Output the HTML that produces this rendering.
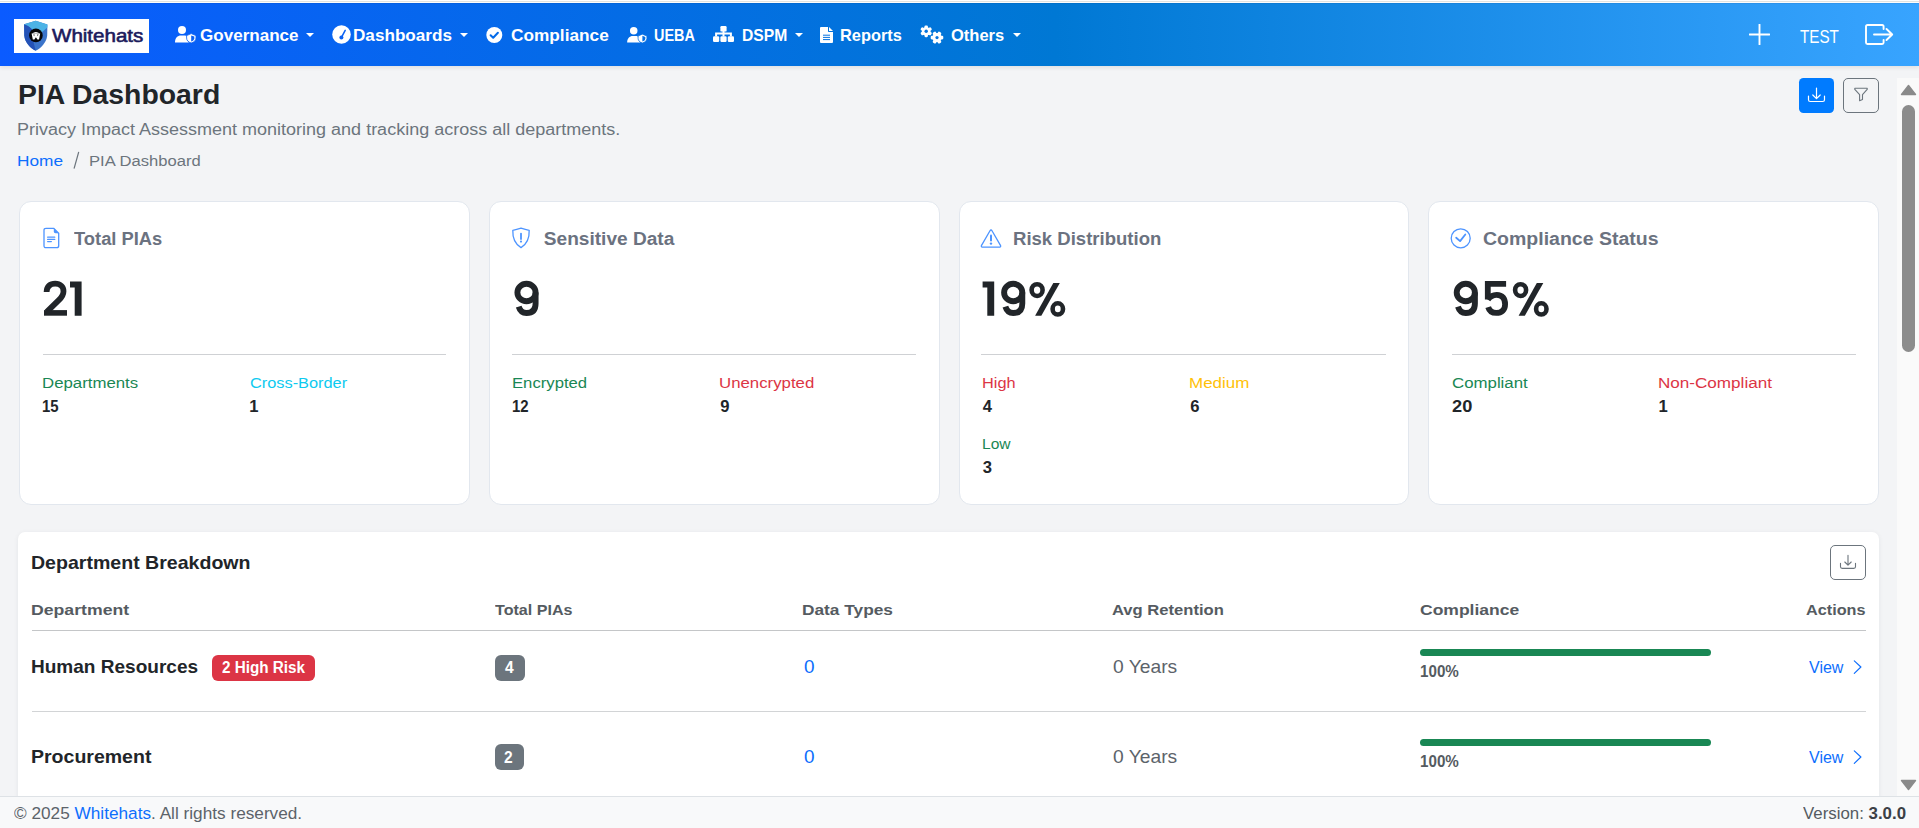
<!DOCTYPE html>
<html><head><meta charset="utf-8"><title>PIA Dashboard</title>
<style>
html,body{margin:0;padding:0;}
body{width:1919px;height:828px;overflow:hidden;position:relative;background:#f3f4f6;font-family:"Liberation Sans",sans-serif;}
.t{position:absolute;white-space:nowrap;line-height:1;transform-origin:0 0;}
.abs{position:absolute;}
#topline{left:0;top:0;width:1919px;height:3px;background:#fefefe;}
#topline2{left:0;top:1px;width:1919px;height:1px;background:#e2e3e0;}
#nav{left:0;top:3px;width:1919px;height:63px;background:linear-gradient(90deg,#0a5bff 0%,#0078d4 55%,#38a4ff 100%);box-shadow:0 2px 4px rgba(0,0,0,.08);}
#nav:before{content:"";position:absolute;left:0;top:0;right:0;height:1px;background:rgba(0,0,40,.06);}
#logo{left:14px;top:19px;width:135px;height:34px;background:#fff;}
.card{position:absolute;background:#fff;border:1px solid #e2e7ee;border-radius:12px;box-sizing:border-box;}
.divider{position:absolute;height:1px;background:#cfd1d4;}
.badge{position:absolute;border-radius:6px;}
.prog{position:absolute;height:7px;border-radius:4px;background:#198754;}
.hr{position:absolute;height:1px;}

</style></head><body>
<div class="abs" id="topline"></div><div class="abs" id="topline2"></div>
<div class="abs" id="nav"></div>
<div class="abs" id="logo"></div>
<!-- logo shield -->
<svg class="abs" style="left:20px;top:18px" width="32" height="36" viewBox="0 0 32 36">
  <path d="M4.1 6.3 L15.7 2.8 L27.4 6.5 L27.2 17.5 C26.5 24 22 29.5 15.7 32.8 C9.4 29.5 4.9 24 4.3 17.5 Z" fill="#3b74ca"/>
  <path d="M4.1 6.3 C9 7.8 13 10.5 15.9 17.4 L13.2 23 L15.7 32.8 C9.4 29.5 4.9 24 4.3 17.5 Z" fill="#2452b6"/>
  <path d="M4.1 6.3 L15.7 2.8 L27.4 6.5 L27.3 9.5 L21.5 14.5 L15.9 17.4 C13.5 11.5 9.5 8 4.1 6.3 Z" fill="#4cb3e6"/>
  <circle cx="15.9" cy="17.4" r="6.8" fill="#050508"/>
  <path d="M12 15.6 Q15.9 12.2 19.8 15.6 Z" fill="#fff"/>
  <path d="M11.6 15.4 H20.2 L19 21.6 H17.4 L15.9 19.3 L14.4 21.6 H12.8 Z" fill="#fff"/>
  <path d="M13.3 16.6 L14.6 16.6 L14.1 18.2 Z M17.2 16.6 L18.5 16.6 L17.7 18.2 Z" fill="#050508"/>
</svg>
<!-- nav icons (white) -->
<!-- user-shield governance -->
<svg class="abs" style="left:175px;top:26.3px" width="22" height="17.5" viewBox="0 0 22 17.5">
  <circle cx="7" cy="4" r="4" fill="#fff"/>
  <path d="M0 16.5 C0 12 2.5 9.5 6 9.5 H9 C10.5 9.5 11.5 10 12.2 10.6 V12 C12.2 14 13 15.5 14 16.5 Z" fill="#fff"/>
  <path d="M16.2 7.6 L21 9.6 V12 C21 14.5 19 16.2 16.2 17 C13.4 16.2 11.6 14.5 11.6 12 V9.6 Z" fill="#fff" stroke="#0a60f2" stroke-width="0.8"/>
  <path d="M16.2 9.4 L19.3 10.6 V12.2 C19.3 13.8 18 14.9 16.2 15.4 Z" fill="#0a60f2"/>
</svg>
<svg class="abs" style="left:306px;top:33px" width="8" height="4" viewBox="0 0 8 4"><path d="M0 0 H8 L4 4 Z" fill="#fff"/></svg>
<!-- tachometer dashboards -->
<svg class="abs" style="left:331.5px;top:25px" width="19" height="19" viewBox="0 0 19 19">
  <circle cx="9.5" cy="9.5" r="9.3" fill="#fff"/>
  <path d="M13.2 5.3 L9.6 12.2" stroke="#0a60f2" stroke-width="1.5" stroke-linecap="round"/>
  <circle cx="9.4" cy="12.6" r="2" fill="#0a60f2"/>
</svg>
<svg class="abs" style="left:460px;top:33px" width="8" height="4" viewBox="0 0 8 4"><path d="M0 0 H8 L4 4 Z" fill="#fff"/></svg>
<!-- check-circle compliance -->
<svg class="abs" style="left:485.5px;top:27px" width="17" height="16" viewBox="0 0 17 16">
  <circle cx="8.3" cy="8" r="8" fill="#fff"/>
  <path d="M4.6 8.3 L7.2 10.8 L11.9 5.8" stroke="#046be9" stroke-width="2" fill="none" stroke-linecap="round" stroke-linejoin="round"/>
</svg>
<!-- user-shield UEBA -->
<svg class="abs" style="left:626.5px;top:27px" width="21" height="16" viewBox="0 0 22 17">
  <circle cx="7" cy="4" r="4" fill="#fff"/>
  <path d="M0 16.5 C0 12 2.5 9.5 6 9.5 H9 C10.5 9.5 11.5 10 12.2 10.6 V12 C12.2 14 13 15.5 14 16.5 Z" fill="#fff"/>
  <path d="M16.2 7.6 L21 9.6 V12 C21 14.5 19 16.2 16.2 17 C13.4 16.2 11.6 14.5 11.6 12 V9.6 Z" fill="#fff" stroke="#0470e4" stroke-width="0.8"/>
  <path d="M16.2 9.4 L19.3 10.6 V12.2 C19.3 13.8 18 14.9 16.2 15.4 Z" fill="#0470e4"/>
</svg>
<!-- sitemap DSPM -->
<svg class="abs" style="left:713px;top:26px" width="21" height="16" viewBox="0 0 21 16">
  <rect x="7.4" y="0" width="6.2" height="5.6" rx="1.2" fill="#fff"/>
  <rect x="0" y="10.2" width="6.2" height="5.8" rx="1.2" fill="#fff"/>
  <rect x="7.4" y="10.2" width="6.2" height="5.8" rx="1.2" fill="#fff"/>
  <rect x="14.8" y="10.2" width="6.2" height="5.8" rx="1.2" fill="#fff"/>
  <path d="M10.5 5 V10.5 M3.1 10.5 V7.6 H17.9 V10.5" stroke="#fff" stroke-width="2" fill="none"/>
</svg>
<svg class="abs" style="left:795px;top:33px" width="8" height="4" viewBox="0 0 8 4"><path d="M0 0 H8 L4 4 Z" fill="#fff"/></svg>
<!-- file-alt reports -->
<svg class="abs" style="left:820px;top:27px" width="13" height="16" viewBox="0 0 13 16">
  <path d="M0 1 Q0 0 1 0 H8 V4.2 Q8 5 8.8 5 H13 V15 Q13 16 12 16 H1 Q0 16 0 15 Z" fill="#fff"/>
  <path d="M9 0 L13 4 H9 Z" fill="#fff"/>
  <path d="M3 8.2 H10 M3 10.4 H10 M3 12.6 H10" stroke="#0672e0" stroke-width="1"/>
</svg>
<!-- cogs others -->
<svg class="abs" style="left:919.5px;top:25px" width="24" height="20" viewBox="0 0 24 20">
  <g transform="translate(6.2,6.3)" fill="#fff">
    <circle r="4.3"/>
    <rect x="-1.7" y="-5.9" width="3.4" height="11.8" rx="1.1"/><rect x="-1.7" y="-5.9" width="3.4" height="11.8" rx="1.1" transform="rotate(60)"/><rect x="-1.7" y="-5.9" width="3.4" height="11.8" rx="1.1" transform="rotate(120)"/>
    <circle r="1.7" fill="#0675df"/>
  </g>
  <g transform="translate(17,12.6)" fill="#fff">
    <circle r="4.6"/>
    <rect x="-1.8" y="-6.3" width="3.6" height="12.6" rx="1.1" transform="rotate(90)"/><rect x="-1.8" y="-6.3" width="3.6" height="12.6" rx="1.1" transform="rotate(30)"/><rect x="-1.8" y="-6.3" width="3.6" height="12.6" rx="1.1" transform="rotate(150)"/>
    <circle r="1.6" fill="#0675df"/>
  </g>
</svg>
<svg class="abs" style="left:1013px;top:33px" width="8" height="4" viewBox="0 0 8 4"><path d="M0 0 H8 L4 4 Z" fill="#fff"/></svg>
<!-- plus -->
<svg class="abs" style="left:1749px;top:24px" width="21" height="21" viewBox="0 0 21 21">
  <path d="M10.5 0.5 V20.5 M0.5 10.5 H20.5" stroke="#fff" stroke-width="1.9" stroke-linecap="round"/>
</svg>
<!-- logout -->
<svg class="abs" style="left:1865px;top:24px" width="29" height="21" viewBox="0 0 29 21">
  <path d="M18.6 5 V2.5 Q18.6 1 17.1 1 H2.5 Q1 1 1 2.5 V18.5 Q1 20 2.5 20 H17.1 Q18.6 20 18.6 18.5 V16" stroke="#fff" stroke-width="1.9" fill="none" stroke-linecap="round"/>
  <path d="M9 10.5 H27 M21.5 5 L27.2 10.5 L21.5 16" stroke="#fff" stroke-width="1.9" fill="none" stroke-linecap="round" stroke-linejoin="round"/>
</svg>

<!-- top right buttons -->
<div class="abs" style="left:1799px;top:78px;width:35px;height:35px;border-radius:4.5px;background:#007bff"></div>
<svg class="abs" style="left:1807px;top:87px" width="19" height="16" viewBox="0 0 19 16">
  <path d="M9.5 1 V11.5 M5.8 8 L9.5 11.7 L13.2 8" stroke="#fff" stroke-width="1.2" fill="none" stroke-linecap="round" stroke-linejoin="round"/>
  <path d="M1.5 9 V12.7 Q1.5 14.5 3.3 14.5 H15.7 Q17.5 14.5 17.5 12.7 V9" stroke="#fff" stroke-width="1.2" fill="none" stroke-linecap="round"/>
</svg>
<div class="abs" style="left:1843px;top:78px;width:36px;height:35px;border-radius:5px;border:1px solid #6c757d;box-sizing:border-box"></div>
<svg class="abs" style="left:1853px;top:87px" width="16" height="16" viewBox="0 0 16 16">
  <path d="M1.8 1.2 H14.2 V2.4 L9.5 7.6 V12.6 L6.6 13.8 V7.6 L1.8 2.4 Z" stroke="#6c757d" stroke-width="1.1" fill="none" stroke-linejoin="round"/>
</svg>

<!-- cards -->
<div class="card" style="left:18.5px;top:200.5px;width:451px;height:304px"></div>
<div class="card" style="left:488.5px;top:200.5px;width:451px;height:304px"></div>
<div class="card" style="left:958.5px;top:200.5px;width:450px;height:304px"></div>
<div class="card" style="left:1428px;top:200.5px;width:451px;height:304px"></div>
<div class="divider" style="left:42.5px;top:354px;width:403px"></div>
<div class="divider" style="left:511.5px;top:354px;width:404.5px"></div>
<div class="divider" style="left:981px;top:354px;width:405px"></div>
<div class="divider" style="left:1451.5px;top:354px;width:404px"></div>
<!-- card icons (blue outline) -->
<svg class="abs" style="left:43px;top:227px" width="17" height="22" viewBox="0 0 17 22">
  <path d="M3 1.3 H10.8 L15.7 6.2 V18.7 Q15.7 20.7 13.7 20.7 H3 Q1 20.7 1 18.7 V3.3 Q1 1.3 3 1.3 Z" stroke="#4d94ff" stroke-width="1.3" fill="none"/>
  <path d="M10.8 1.3 V4.5 Q10.8 6.2 12.5 6.2 H15.7 Z" fill="#4d94ff"/>
  <path d="M4.6 10.2 H11.8 M4.6 12.4 H11.8 M4.6 14.6 H8.4" stroke="#4d94ff" stroke-width="1.2" stroke-linecap="round"/>
</svg>
<svg class="abs" style="left:511px;top:227px" width="20" height="22" viewBox="0 0 20 22">
  <path d="M10 1.2 C7 2.2 4.3 2.9 1.8 3.3 C1.5 11 3.8 17 10 20.6 C16.2 17 18.5 11 18.2 3.3 C15.7 2.9 13 2.2 10 1.2 Z" stroke="#4d94ff" stroke-width="1.3" fill="none" stroke-linejoin="round"/>
  <path d="M10 6.6 V12" stroke="#4d94ff" stroke-width="1.8" stroke-linecap="round"/>
  <circle cx="10" cy="14.6" r="1.05" fill="#4d94ff"/>
</svg>
<svg class="abs" style="left:980px;top:227.8px" width="22" height="21" viewBox="0 0 22 21">
  <path d="M11 2 Q11.6 2 12 2.7 L20.6 17.6 Q21 18.9 19.6 19.2 H2.4 Q1 18.9 1.4 17.6 L10 2.7 Q10.4 2 11 2 Z" stroke="#4d94ff" stroke-width="1.3" fill="none" stroke-linejoin="round"/>
  <path d="M11 7.6 L11 12.6" stroke="#4d94ff" stroke-width="2" stroke-linecap="round"/>
  <circle cx="11" cy="15.6" r="1.2" fill="#4d94ff"/>
</svg>
<svg class="abs" style="left:1450px;top:228px" width="22" height="21" viewBox="0 0 22 21">
  <circle cx="10.7" cy="10.3" r="9.5" stroke="#4d94ff" stroke-width="1.3" fill="none"/>
  <path d="M6.2 9.7 L10.1 13.1 L15.3 6.5" stroke="#4d94ff" stroke-width="1.8" fill="none" stroke-linecap="round" stroke-linejoin="round"/>
</svg>

<!-- table card -->
<div class="abs" style="left:18px;top:531.5px;width:1861px;height:330px;background:#fff;border-radius:7px;box-shadow:0 1px 5px rgba(30,40,60,.07)"></div>
<div class="abs" style="left:1830px;top:545px;width:36px;height:35px;border-radius:5px;border:1px solid #6c757d;box-sizing:border-box"></div>
<svg class="abs" style="left:1839px;top:554px" width="18" height="16" viewBox="0 0 18 16">
  <path d="M9 1.2 V11 M5.8 8 L9 11.2 L12.2 8" stroke="#6c757d" stroke-width="1.1" fill="none" stroke-linecap="round" stroke-linejoin="round"/>
  <path d="M1.5 9.2 V12.8 Q1.5 14.4 3.1 14.4 H14.9 Q16.5 14.4 16.5 12.8 V9.2" stroke="#6c757d" stroke-width="1.1" fill="none" stroke-linecap="round"/>
</svg>
<div class="hr" style="left:31.5px;top:629.5px;width:1834px;background:#c4c6c8"></div>
<div class="hr" style="left:31.5px;top:711px;width:1834px;background:#d2d4d6"></div>
<div class="badge" style="left:212px;top:655px;width:103px;height:26px;background:#dc3545"></div>
<div class="badge" style="left:495px;top:655px;width:30px;height:26px;background:#6c757d"></div>
<div class="badge" style="left:495px;top:744px;width:28.5px;height:26px;background:#6c757d"></div>
<div class="prog" style="left:1420px;top:649px;width:291px"></div>
<div class="prog" style="left:1420px;top:739px;width:291px"></div>
<svg class="abs" style="left:1852px;top:660px" width="11" height="15" viewBox="0 0 11 15"><path d="M2.3 0.8 L8.9 7 L2.3 13.3" stroke="#0d6efd" stroke-width="1.15" fill="none" stroke-linecap="round" stroke-linejoin="round"/></svg>
<svg class="abs" style="left:1852px;top:750px" width="11" height="15" viewBox="0 0 11 15"><path d="M2.3 0.8 L8.9 7 L2.3 13.3" stroke="#0d6efd" stroke-width="1.15" fill="none" stroke-linecap="round" stroke-linejoin="round"/></svg>

<!-- scrollbar -->
<div class="abs" style="left:1897px;top:78px;width:22px;height:718px;background:#fafafa"></div>
<svg class="abs" style="left:1900px;top:84px" width="17" height="12" viewBox="0 0 17 12"><path d="M8.5 1.5 L15.5 10.5 H1.5 Z" fill="#8a8a8a" stroke="#8a8a8a" stroke-width="1.4" stroke-linejoin="round"/></svg>
<div class="abs" style="left:1902px;top:105px;width:13px;height:247px;border-radius:6.5px;background:#8c8c8c"></div>
<svg class="abs" style="left:1900px;top:779px" width="17" height="12" viewBox="0 0 17 12"><path d="M8.5 10.5 L15.5 1.5 H1.5 Z" fill="#8a8a8a" stroke="#8a8a8a" stroke-width="1.4" stroke-linejoin="round"/></svg>

<!-- footer -->
<div class="abs" style="left:0;top:796px;width:1919px;height:32px;background:#f8f9fa;border-top:1px solid #dee2e6;box-sizing:border-box"></div>
<svg class="abs" style="left:72px;top:151px" width="9" height="19" viewBox="0 0 9 19"><path d="M6.6 1.3 L2.2 17.2" stroke="#6c757d" stroke-width="1.25" stroke-linecap="round"/></svg>
<svg class="abs" style="left:0;top:0" width="1919" height="400" fill="#212529" stroke="#212529"><g transform="translate(43.6,280.9)"><path d="M3.0 11.2 C3.0 5.5 6.6 2.8 11.6 2.8 C16.8 2.8 19.9 6 19.9 10.3 C19.9 13.8 18.2 16.4 15.2 19.3 L3.2 31.0" fill="none" stroke-width="5.8"/><rect x="0.4" y="29.2" width="23" height="5.6" stroke="none"/></g><g transform="translate(70,280.9)"><path d="M0 0.7 H11.6 V34.8 H4.7 V6.5 H0 Z" stroke="none"/></g><g transform="translate(514.4,280.9)"><ellipse cx="12.1" cy="11.6" rx="9.1" ry="8.7" fill="none" stroke-width="5.9"/><path d="M21.2 11.6 V22.5 C21.2 29.5 17.8 32.1 12.1 32.1 C8.2 32.1 5.6 30.2 4.3 25.8" fill="none" stroke-width="5.9"/></g><g transform="translate(982.6,280.9)"><path d="M0 0.7 H11.6 V34.8 H4.7 V6.5 H0 Z" stroke="none"/></g><g transform="translate(1001.1,280.9)"><ellipse cx="12.1" cy="11.6" rx="9.1" ry="8.7" fill="none" stroke-width="5.9"/><path d="M21.2 11.6 V22.5 C21.2 29.5 17.8 32.1 12.1 32.1 C8.2 32.1 5.6 30.2 4.3 25.8" fill="none" stroke-width="5.9"/></g><g transform="translate(1029.3,280.9)"><ellipse cx="7.8" cy="9.2" rx="5.5" ry="5.9" stroke-width="4.6" fill="none"/><ellipse cx="28.5" cy="28" rx="5.2" ry="5.6" stroke-width="4.6" fill="none"/><path d="M24 2.1 H30.5 L12 34.8 H5.8 Z" stroke="none"/></g><g transform="translate(1453.7,280.9)"><ellipse cx="12.1" cy="11.6" rx="9.1" ry="8.7" fill="none" stroke-width="5.9"/><path d="M21.2 11.6 V22.5 C21.2 29.5 17.8 32.1 12.1 32.1 C8.2 32.1 5.6 30.2 4.3 25.8" fill="none" stroke-width="5.9"/></g><g transform="translate(1484.1,280.9)"><path d="M22 2.9 H3.7 V18.5" fill="none" stroke-width="5.8"/><path d="M3.7 18.8 C5.8 15.6 8.8 13.9 12.6 13.9 C18.3 13.9 21.0 17.8 21.0 23.3 C21.0 29.2 17.4 32 12.2 32 C8 32 5.1 29.8 4.1 26.2" fill="none" stroke-width="5.8"/></g><g transform="translate(1512.8,280.9)"><ellipse cx="7.8" cy="9.2" rx="5.5" ry="5.9" stroke-width="4.6" fill="none"/><ellipse cx="28.5" cy="28" rx="5.2" ry="5.6" stroke-width="4.6" fill="none"/><path d="M24 2.1 H30.5 L12 34.8 H5.8 Z" stroke="none"/></g></svg>
<div class="t" id="logotxt" style="left:52.00px;top:26.79px;font-size:18.6px;color:#1b1a5c;font-weight:400;transform:scaleX(1.1047);-webkit-text-stroke:0.6px #1b1a5c;">Whitehats</div>
<div class="t" id="nav0" style="left:199.70px;top:27.69px;font-size:16.6px;color:#ffffff;font-weight:700;transform:scaleX(1.0273);">Governance</div>
<div class="t" id="nav1" style="left:352.97px;top:27.69px;font-size:16.6px;color:#ffffff;font-weight:700;transform:scaleX(1.0320);">Dashboards</div>
<div class="t" id="nav2" style="left:510.80px;top:27.69px;font-size:16.6px;color:#ffffff;font-weight:700;transform:scaleX(1.0392);">Compliance</div>
<div class="t" id="nav3" style="left:654.13px;top:27.69px;font-size:16.6px;color:#ffffff;font-weight:700;transform:scaleX(0.8689);">UEBA</div>
<div class="t" id="nav4" style="left:741.56px;top:27.69px;font-size:16.6px;color:#ffffff;font-weight:700;transform:scaleX(0.9432);">DSPM</div>
<div class="t" id="nav5" style="left:840.31px;top:27.69px;font-size:16.6px;color:#ffffff;font-weight:700;transform:scaleX(0.9875);">Reports</div>
<div class="t" id="nav6" style="left:951.00px;top:27.69px;font-size:16.6px;color:#ffffff;font-weight:700;transform:scaleX(0.9952);">Others</div>
<div class="t" id="test" style="left:1800.40px;top:27.79px;font-size:18.6px;color:#ffffff;font-weight:400;transform:scaleX(0.8185);">TEST</div>
<div class="t" id="h1" style="left:18.46px;top:80.59px;font-size:27.3px;color:#212529;font-weight:700;transform:scaleX(1.0389);">PIA Dashboard</div>
<div class="t" id="sub" style="left:17.36px;top:122.07px;font-size:15.8px;color:#6c757d;font-weight:400;transform:scaleX(1.1394);">Privacy Impact Assessment monitoring and tracking across all departments.</div>
<div class="t" id="home" style="left:17.46px;top:152.78px;font-size:15.2px;color:#0d6efd;font-weight:400;transform:scaleX(1.1365);">Home</div>
<div class="t" id="crumb" style="left:88.51px;top:152.78px;font-size:15.2px;color:#6c757d;font-weight:400;transform:scaleX(1.0930);">PIA Dashboard</div>
<div class="t" id="ct0" style="left:73.70px;top:228.76px;font-size:19.1px;color:#6b7280;font-weight:700;transform:scaleX(0.9603);">Total PIAs</div>
<div class="t" id="cl0_0" style="left:41.59px;top:375.38px;font-size:15.2px;color:#198754;font-weight:400;transform:scaleX(1.1060);">Departments</div>
<div class="t" id="cv0_0" style="left:41.80px;top:398.99px;font-size:16.6px;color:#212529;font-weight:700;transform:scaleX(0.8997);">15</div>
<div class="t" id="cl0_1" style="left:250.20px;top:375.38px;font-size:15.2px;color:#0dcaf0;font-weight:400;transform:scaleX(1.0749);">Cross-Border</div>
<div class="t" id="cv0_1" style="left:249.20px;top:398.99px;font-size:16.6px;color:#212529;font-weight:700;">1</div>
<div class="t" id="ct1" style="left:543.80px;top:228.76px;font-size:19.1px;color:#6b7280;font-weight:700;">Sensitive Data</div>
<div class="t" id="cl1_0" style="left:511.70px;top:375.38px;font-size:15.2px;color:#198754;font-weight:400;transform:scaleX(1.0981);">Encrypted</div>
<div class="t" id="cv1_0" style="left:511.90px;top:398.99px;font-size:16.6px;color:#212529;font-weight:700;transform:scaleX(0.8997);">12</div>
<div class="t" id="cl1_1" style="left:719.19px;top:375.38px;font-size:15.2px;color:#dc3545;font-weight:400;transform:scaleX(1.1067);">Unencrypted</div>
<div class="t" id="cv1_1" style="left:720.30px;top:398.99px;font-size:16.6px;color:#212529;font-weight:700;">9</div>
<div class="t" id="ct2" style="left:1012.83px;top:228.76px;font-size:19.1px;color:#6b7280;font-weight:700;transform:scaleX(0.9709);">Risk Distribution</div>
<div class="t" id="cl2_0" style="left:981.73px;top:375.38px;font-size:15.2px;color:#dc3545;font-weight:400;transform:scaleX(1.0742);">High</div>
<div class="t" id="cv2_0" style="left:982.80px;top:398.99px;font-size:16.6px;color:#212529;font-weight:700;">4</div>
<div class="t" id="cl2_1" style="left:1189.18px;top:375.38px;font-size:15.2px;color:#ffc107;font-weight:400;transform:scaleX(1.1191);">Medium</div>
<div class="t" id="cv2_1" style="left:1190.30px;top:398.99px;font-size:16.6px;color:#212529;font-weight:700;">6</div>
<div class="t" id="cl2_2" style="left:981.77px;top:436.38px;font-size:15.2px;color:#198754;font-weight:400;transform:scaleX(1.0263);">Low</div>
<div class="t" id="cv2_2" style="left:982.80px;top:459.99px;font-size:16.6px;color:#212529;font-weight:700;">3</div>
<div class="t" id="ct3" style="left:1483.00px;top:228.76px;font-size:19.1px;color:#6b7280;font-weight:700;transform:scaleX(1.0212);">Compliance Status</div>
<div class="t" id="cl3_0" style="left:1452.00px;top:375.38px;font-size:15.2px;color:#198754;font-weight:400;transform:scaleX(1.1077);">Compliant</div>
<div class="t" id="cv3_0" style="left:1452.00px;top:398.99px;font-size:16.6px;color:#212529;font-weight:700;transform:scaleX(1.0972);">20</div>
<div class="t" id="cl3_1" style="left:1658.38px;top:375.38px;font-size:15.2px;color:#dc3545;font-weight:400;transform:scaleX(1.1249);">Non-Compliant</div>
<div class="t" id="cv3_1" style="left:1658.50px;top:398.99px;font-size:16.6px;color:#212529;font-weight:700;">1</div>
<div class="t" id="tbl" style="left:30.74px;top:554.16px;font-size:18.4px;color:#212529;font-weight:700;transform:scaleX(1.0634);">Department Breakdown</div>
<div class="t" id="th0" style="left:30.64px;top:601.88px;font-size:15.2px;color:#555b61;font-weight:700;transform:scaleX(1.1628);">Department</div>
<div class="t" id="th1" style="left:494.80px;top:601.88px;font-size:15.2px;color:#555b61;font-weight:700;transform:scaleX(1.0593);">Total PIAs</div>
<div class="t" id="th2" style="left:802.46px;top:601.88px;font-size:15.2px;color:#555b61;font-weight:700;transform:scaleX(1.1382);">Data Types</div>
<div class="t" id="th3" style="left:1112.00px;top:601.88px;font-size:15.2px;color:#555b61;font-weight:700;transform:scaleX(1.0931);">Avg Retention</div>
<div class="t" id="th4" style="left:1420.00px;top:601.88px;font-size:15.2px;color:#555b61;font-weight:700;transform:scaleX(1.1526);">Compliance</div>
<div class="t" id="th5" style="left:1806.00px;top:601.88px;font-size:15.2px;color:#555b61;font-weight:700;transform:scaleX(1.0680);">Actions</div>
<div class="t" id="rn0" style="left:30.77px;top:657.56px;font-size:18.4px;color:#212529;font-weight:700;transform:scaleX(1.0346);">Human Resources</div>
<div class="t" id="rd0" style="left:803.60px;top:657.73px;font-size:18.2px;color:#0d6efd;font-weight:400;transform:scaleX(1.0400);">0</div>
<div class="t" id="ry0" style="left:1112.50px;top:657.73px;font-size:18.2px;color:#5c636a;font-weight:400;transform:scaleX(1.0589);">0 Years</div>
<div class="t" id="rp0" style="left:1420.10px;top:663.52px;font-size:16.8px;color:#555b61;font-weight:700;transform:scaleX(0.9048);">100%</div>
<div class="t" id="rv0" style="left:1809.00px;top:660.00px;font-size:16.7px;color:#0d6efd;font-weight:400;transform:scaleX(0.9588);">View</div>
<div class="t" id="rn1" style="left:30.74px;top:747.66px;font-size:18.4px;color:#212529;font-weight:700;transform:scaleX(1.0613);">Procurement</div>
<div class="t" id="rd1" style="left:803.60px;top:747.83px;font-size:18.2px;color:#0d6efd;font-weight:400;transform:scaleX(1.0400);">0</div>
<div class="t" id="ry1" style="left:1112.50px;top:747.83px;font-size:18.2px;color:#5c636a;font-weight:400;transform:scaleX(1.0589);">0 Years</div>
<div class="t" id="rp1" style="left:1420.10px;top:753.62px;font-size:16.8px;color:#555b61;font-weight:700;transform:scaleX(0.9048);">100%</div>
<div class="t" id="rv1" style="left:1809.00px;top:750.10px;font-size:16.7px;color:#0d6efd;font-weight:400;transform:scaleX(0.9588);">View</div>
<div class="t" id="badge" style="left:222.00px;top:659.94px;font-size:15.6px;color:#ffffff;font-weight:700;transform:scaleX(0.9783);">2 High Risk</div>
<div class="t" id="b4" style="left:505.00px;top:659.94px;font-size:15.6px;color:#ffffff;font-weight:700;">4</div>
<div class="t" id="b2" style="left:504.00px;top:750.04px;font-size:15.6px;color:#ffffff;font-weight:700;">2</div>
<div class="t" id="foot" style="left:14.00px;top:805.35px;font-size:16.3px;color:#5c636a;font-weight:400;transform:scaleX(1.0568);">&copy; 2025 <span style="color:#0d6efd">Whitehats</span>. All rights reserved.</div>
<div class="t" id="ver" style="left:1803.00px;top:805.23px;font-size:16.2px;color:#555b61;font-weight:400;transform:scaleX(1.0405);">Version: <b style="color:#3b4046">3.0.0</b></div>
</body></html>
